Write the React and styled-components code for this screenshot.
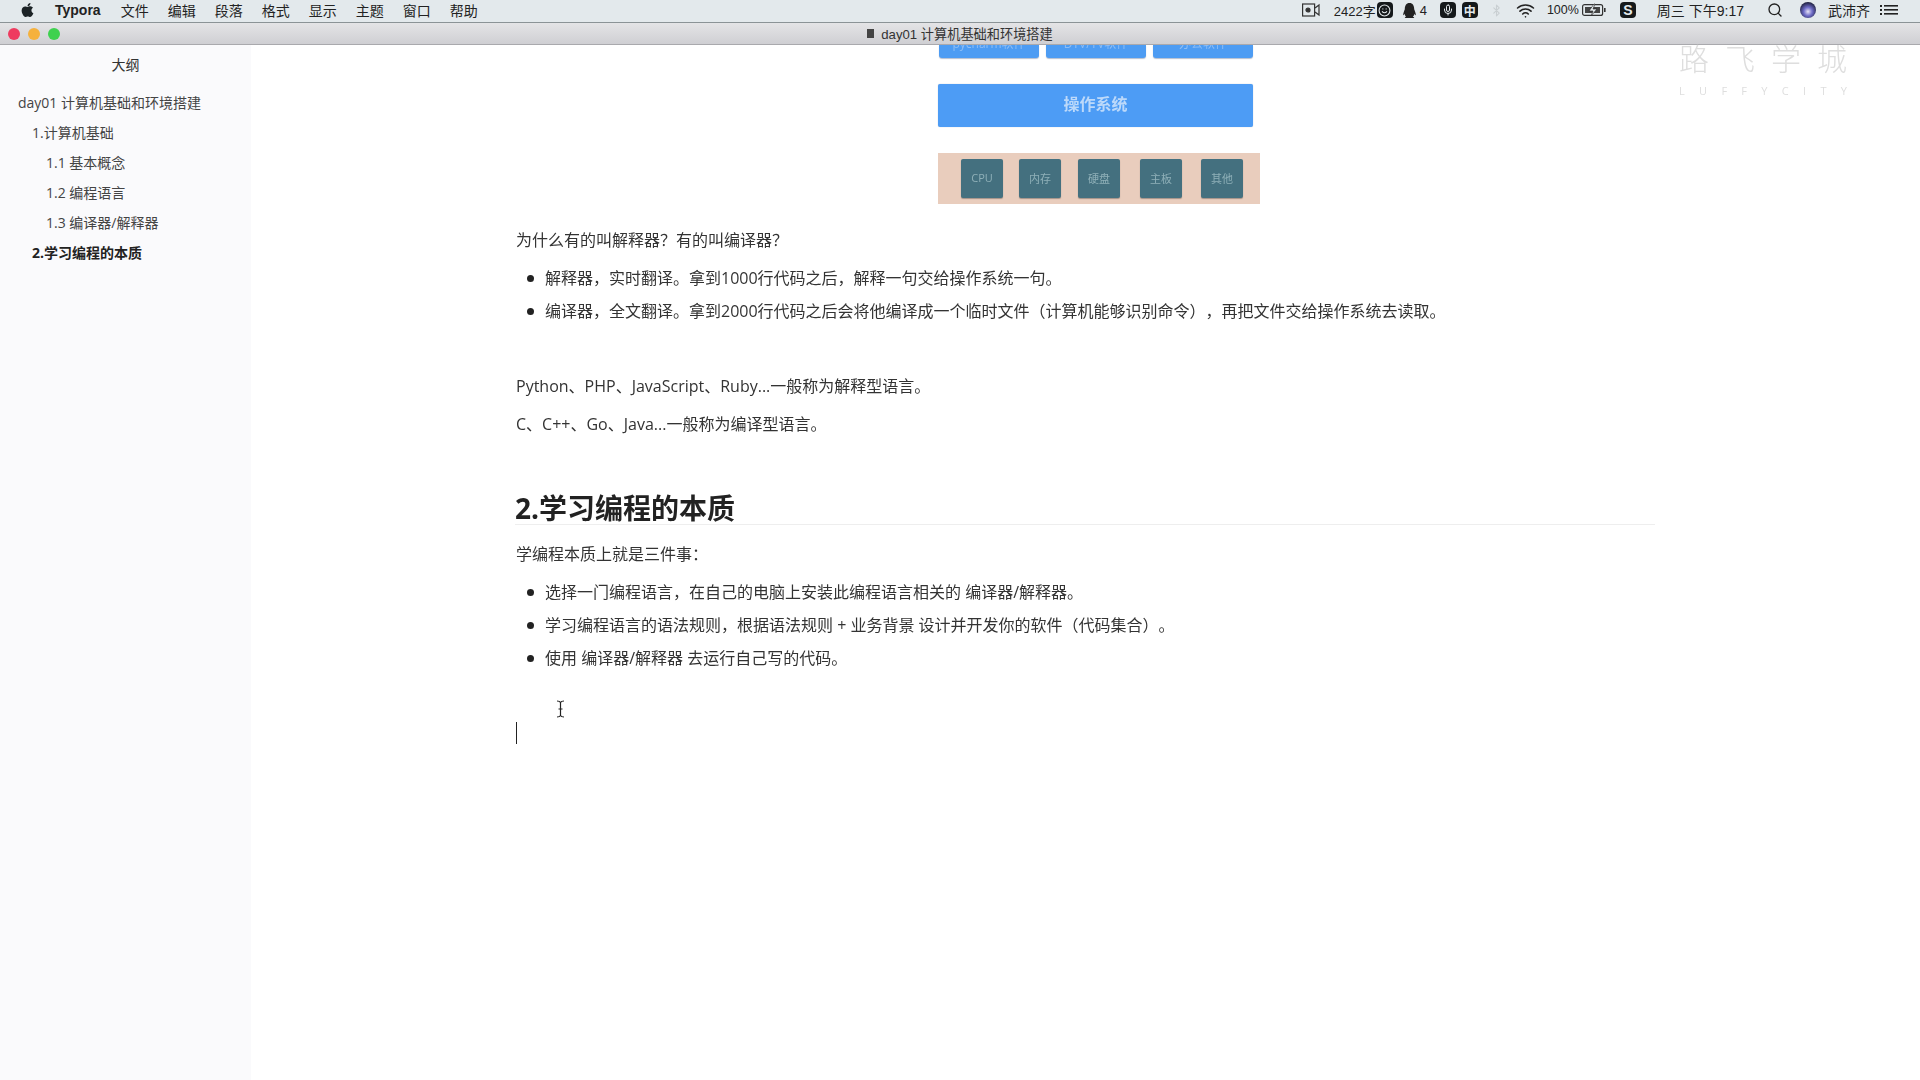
import {createGlobalStyle} from 'styled-components';
import styled from 'styled-components';
import {FaApple, FaQq} from 'react-icons/fa';
import {Bluetooth, Mic, Search, Smile, Wifi} from 'lucide-react';

const cjk = `"Open Sans", "Noto Sans CJK SC", sans-serif`;
const menus = ['文件', '编辑', '段落', '格式', '显示', '主题', '窗口', '帮助'];
const outline = [
    {text: 'day01 计算机基础和环境搭建', level: 0},
    {text: '1.计算机基础', level: 1},
    {text: '1.1 基本概念', level: 2},
    {text: '1.2 编程语言', level: 2},
    {text: '1.3 编译器/解释器', level: 2},
    {text: '2.学习编程的本质', level: 1, active: true},
];
const chips = [
    {name: 'CPU', gap: 23},
    {name: '内存', gap: 16},
    {name: '硬盘', gap: 17},
    {name: '主板', gap: 20},
    {name: '其他', gap: 19},
];

const Global = createGlobalStyle`
    html, body {
        margin: 0;
        padding: 0;
        background: #fff;
    }
    body {
        font-family: ${cjk};
        color: #333;
    }
`;

const Screen = styled.div`
    position: relative;
    display: flex;
    flex-direction: column;
    width: 1920px;
    height: 1080px;
    overflow: hidden;
    filter: blur(0.3px);
`;

const MenuBar = styled.div`
    display: flex;
    align-items: center;
    flex: none;
    height: 20px;
    padding: 0 0 2px 20px;
    background: #e3e9ec;
    border-bottom: 1px solid #8b9396;
    font-size: 14px;
    color: #222;
`;
const AppleIcon = styled(FaApple)`
    width: 15px;
    height: 16px;
    color: #1c2326;
    margin-right: 20px;
`;
const AppName = styled.span`
    font-family: "Liberation Sans", sans-serif;
    font-weight: 700;
    margin-right: 20px;
`;
const MenuItem = styled.span`
    margin-right: 19px;
    width: 28px;
`;
const Status = styled.div`
    display: flex;
    align-items: center;
    margin-left: auto;
    padding-right: 22px;
    font-family: "Liberation Sans", "Noto Sans CJK SC", sans-serif;
    font-size: 13px;
`;
const Tray = styled.span`
    display: flex;
    align-items: center;
    justify-content: center;
    margin-left: ${(p) => p.$gap}px;
    font-size: ${(p) => p.$size || 13}px;
    color: ${(p) => p.$color || '#222'};
`;
const TrayBadge = styled.span`
    display: flex;
    align-items: center;
    justify-content: center;
    width: 16px;
    height: 16px;
    margin-left: ${(p) => p.$gap}px;
    border-radius: 4px;
    background: #15191b;
    color: #e3e9ec;
    font-size: ${(p) => p.$size || 12}px;
    font-weight: 700;
`;

const TitleBar = styled.div`
    position: relative;
    display: flex;
    align-items: center;
    justify-content: center;
    flex: none;
    height: 21px;
    background: linear-gradient(#e4e4e6, #cfcfd3);
    border-bottom: 1px solid #a9a9ad;
    font-family: "Liberation Sans", "Noto Sans CJK SC", sans-serif;
    font-size: 13.2px;
    color: #333;
`;
const Lights = styled.div`
    position: absolute;
    left: 8px;
    top: 5px;
    display: flex;
    gap: 8px;
`;
const Light = styled.span`
    width: 12px;
    height: 12px;
    border-radius: 50%;
    background: ${(p) => p.$color};
`;
const DocIcon = styled.span`
    width: 7px;
    height: 9px;
    margin-right: 7px;
    background: #444;
`;

const Body = styled.div`
    display: flex;
    flex: 1;
    min-height: 0;
`;
const Sidebar = styled.aside`
    flex: none;
    width: 251px;
    background: #fafafc;
    font-size: 14px;
`;
const SideTitle = styled.div`
    height: 43px;
    line-height: 40px;
    text-align: center;
    color: #333;
`;
const SideList = styled.div`
    display: flex;
    flex-direction: column;
`;
const SideItem = styled.div`
    height: 30px;
    line-height: 30px;
    padding-left: ${(p) => 18 + p.$level * 14}px;
    font-weight: ${(p) => (p.$active ? 700 : 400)};
    color: ${(p) => (p.$active ? '#222' : '#444')};
`;

const Main = styled.main`
    flex: 1;
    padding-left: 264px;
    overflow: hidden;
`;
const Doc = styled.div`
    width: 1140px;
    font-size: 16px;
    color: #333;
    text-spacing-trim: space-all;
`;

const Diagram = styled.div`
    display: flex;
    flex-direction: column;
    width: 322px;
    margin-left: 423px;
`;
const TopRow = styled.div`
    display: flex;
    gap: 7px;
    height: 13px;
    padding-left: 1px;
`;
const TopBox = styled.div`
    display: flex;
    align-items: flex-end;
    justify-content: center;
    width: 100px;
    height: 13px;
    overflow: hidden;
    border-radius: 0 0 3px 3px;
    background: #4d9cf3;
    box-shadow: 0 1px 1px rgba(40, 70, 120, 0.35);
    font-size: 12px;
    line-height: 28px;
    color: #8dbdf5;
`;
const OsBox = styled.div`
    display: flex;
    align-items: center;
    justify-content: center;
    box-sizing: border-box;
    width: 315px;
    height: 43px;
    margin-top: 26px;
    padding-bottom: 5px;
    border-radius: 2px;
    background: #4d9cf5;
    box-shadow: 0 0 1px rgba(40, 70, 120, 0.4);
    font-size: 16px;
    font-weight: 600;
    color: #bcd9fa;
`;
const Hardware = styled.div`
    display: flex;
    width: 322px;
    height: 51px;
    margin-top: 26px;
    padding-top: 6px;
    box-sizing: border-box;
    background: #e9cdbd;
`;
const Chip = styled.div`
    display: flex;
    align-items: center;
    justify-content: center;
    box-sizing: border-box;
    width: 42px;
    height: 39px;
    margin-left: ${(p) => p.$gap}px;
    padding-bottom: 2px;
    border-radius: 2px;
    background: #44707f;
    box-shadow: 0 1px 1px rgba(60, 60, 60, 0.4);
    font-size: 11px;
    color: #8fb0b8;
    filter: blur(0.5px);
`;

const P = styled.p`
    margin: ${(p) => p.$top}px 0 0 1px;
    line-height: 26px;
`;
const List = styled.ul`
    margin: 12px 0 0;
    padding: 0 0 0 30px;
    list-style: none;
`;
const Item = styled.li`
    display: flex;
    align-items: center;
    height: 26px;
    line-height: 26px;
    margin-bottom: 7px;
    &::before {
        content: '';
        flex: none;
        width: 7px;
        height: 7px;
        margin: 0 11px 0 -18px;
        border-radius: 50%;
        background: #222;
    }
    &:last-child {
        margin-bottom: 0;
    }
`;
const H2 = styled.h2`
    margin: 55px 0 0;
    font-size: 28px;
    line-height: 32px;
    font-weight: 700;
    color: #222;
    border-bottom: 1px solid #eeeeee;
`;
const Caret = styled.div`
    width: 1px;
    height: 22px;
    margin: 51px 0 0 1px;
    background: #222;
`;

const Watermark = styled.div`
    position: absolute;
    left: 1679px;
    top: 41px;
    width: 168px;
    color: #dedede;
    pointer-events: none;
`;
const MarkTitle = styled.div`
    display: flex;
    justify-content: space-between;
    font-size: 30px;
    line-height: 36px;
    font-weight: 300;
`;
const MarkSub = styled.div`
    display: flex;
    justify-content: space-between;
    margin-top: 7px;
    font-size: 11px;
    line-height: 14px;
`;
const Cursor = styled.svg`
    position: absolute;
    left: 556px;
    top: 700px;
`;

const Camera = () => (
    <svg width="18" height="14" viewBox="0 0 18 14" fill="none" stroke="#333" strokeWidth="1.2">
        <rect x="0.6" y="1" width="12" height="12" />
        <circle cx="6" cy="7" r="2" fill="#333" />
        <path d="M13 5l4-3v10l-4-3" />
    </svg>
);
const Battery = () => (
    <svg width="24" height="14" viewBox="0 0 24 14" fill="none">
        <rect x="0.6" y="1.600" width="20" height="10.800" rx="2" stroke="#333" strokeWidth="1.2" />
        <rect x="3" y="4" width="15" height="6" fill="#444" />
        <path d="M12 1l-5 7h4l-2 5 6-7h-4l2-5z" fill="#e3e9ec" stroke="#222" strokeWidth="0.6" />
        <rect x="22" y="5" width="1.600" height="4" fill="#333" />
    </svg>
);
const Siri = () => (
    <svg width="16" height="16" viewBox="0 0 16 16">
        <defs>
            <radialGradient id="siri" cx="50%" cy="60%" r="60%">
                <stop offset="0" stopColor="#e7e3f5" />
                <stop offset="0.45" stopColor="#6f6cc8" />
                <stop offset="1" stopColor="#1c1d3a" />
            </radialGradient>
        </defs>
        <circle cx="8" cy="8" r="8" fill="url(#siri)" />
    </svg>
);
const ListIcon = () => (
    <svg width="18" height="12" viewBox="0 0 18 12" fill="#222">
        <rect x="0" y="1" width="2" height="2" />
        <rect x="0" y="5" width="2" height="2" />
        <rect x="0" y="9" width="2" height="2" />
        <rect x="4" y="1" width="14" height="1.600" />
        <rect x="4" y="5" width="14" height="1.600" />
        <rect x="4" y="9" width="14" height="1.600" />
    </svg>
);

const App = () => {
    return (
        <Screen>
            <Global />
            <MenuBar>
                <AppleIcon />
                <AppName>Typora</AppName>
                {menus.map((item) => (
                    <MenuItem key={item}>{item}</MenuItem>
                ))}
                <Status>
                    <Tray $gap={0}><Camera /></Tray>
                    <Tray $gap={14}>2422字</Tray>
                    <TrayBadge $gap={1}><Smile size={13} /></TrayBadge>
                    <Tray $gap={9}><FaQq size={15} /></Tray>
                    <Tray $gap={3}>4</Tray>
                    <TrayBadge $gap={13}><Mic size={12} /></TrayBadge>
                    <TrayBadge $gap={6}>中</TrayBadge>
                    <Tray $gap={12} $color="#c9cfd2"><Bluetooth size={13} /></Tray>
                    <Tray $gap={13}><Wifi size={19} /></Tray>
                    <Tray $gap={12} $size={12.5}>100%</Tray>
                    <Tray $gap={3}><Battery /></Tray>
                    <TrayBadge $gap={14} $size={14}>S</TrayBadge>
                    <Tray $gap={21} $size={14}>周三 下午9:17</Tray>
                    <Tray $gap={23}><Search size={16} /></Tray>
                    <Tray $gap={17}><Siri /></Tray>
                    <Tray $gap={12} $size={14}>武沛齐</Tray>
                    <Tray $gap={10}><ListIcon /></Tray>
                </Status>
            </MenuBar>
            <TitleBar>
                <Lights>
                    <Light $color="#ee3b5f" />
                    <Light $color="#f5b13d" />
                    <Light $color="#3fd14f" />
                </Lights>
                <DocIcon />
                day01 计算机基础和环境搭建
            </TitleBar>
            <Body>
                <Sidebar>
                    <SideTitle>大纲</SideTitle>
                    <SideList>
                        {outline.map((item) => (
                            <SideItem key={item.text} $level={item.level} $active={item.active}>
                                {item.text}
                            </SideItem>
                        ))}
                    </SideList>
                </Sidebar>
                <Main>
                    <Doc>
                        <Diagram>
                            <TopRow>
                                <TopBox>pycharm软件</TopBox>
                                <TopBox>DTV/TV软件</TopBox>
                                <TopBox>办公软件</TopBox>
                            </TopRow>
                            <OsBox>操作系统</OsBox>
                            <Hardware>
                                {chips.map((chip) => (
                                    <Chip key={chip.name} $gap={chip.gap}>{chip.name}</Chip>
                                ))}
                            </Hardware>
                        </Diagram>
                        <P $top={23}>{'为什么有的叫解释器\uFF1F有的叫编译器\uFF1F'}</P>
                        <List>
                            <Item>{'解释器\uFF0C实时翻译。拿到1000行代码之后\uFF0C解释一句交给操作系统一句。'}</Item>
                            <Item>{'编译器\uFF0C全文翻译。拿到2000行代码之后会将他编译成一个临时文件\uFF08计算机能够识别命令\uFF09\uFF0C再把文件交给操作系统去读取。'}</Item>
                        </List>
                        <P $top={49}>Python、PHP、JavaScript、Ruby...一般称为解释型语言。</P>
                        <P $top={12}>C、C++、Go、Java...一般称为编译型语言。</P>
                        <H2>2.学习编程的本质</H2>
                        <P $top={16}>{'学编程本质上就是三件事\uFF1A'}</P>
                        <List>
                            <Item>{'选择一门编程语言\uFF0C在自己的电脑上安装此编程语言相关的 编译器/解释器。'}</Item>
                            <Item>{'学习编程语言的语法规则\uFF0C根据语法规则 + 业务背景 设计并开发你的软件\uFF08代码集合\uFF09。'}</Item>
                            <Item>使用 编译器/解释器 去运行自己写的代码。</Item>
                        </List>
                        <Caret />
                    </Doc>
                </Main>
            </Body>
            <Watermark>
                <MarkTitle>
                    <span>路</span><span>飞</span><span>学</span><span>城</span>
                </MarkTitle>
                <MarkSub>
                    {'LUFFYCITY'.split('').map((c, i) => (
                        <span key={i}>{c}</span>
                    ))}
                </MarkSub>
            </Watermark>
            <Cursor width="9" height="18" viewBox="0 0 9 18" fill="none" stroke="#222" strokeWidth="1.2">
                <path d="M1 1c2 0 3 .5 3.500 1.500C5 1.500 6 1 8 1M4.500 2.500v13M1 17c2 0 3-.5 3.500-1.500C5 16.500 6 17 8 17M2.500 9h4" />
            </Cursor>
        </Screen>
    );
};

export default App;
